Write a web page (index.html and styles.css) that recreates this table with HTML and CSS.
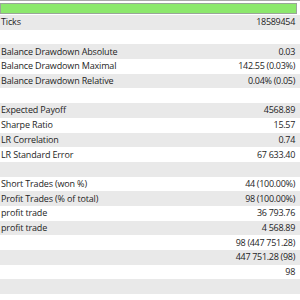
FILE: index.html
```html
<!DOCTYPE html>
<html>
<head>
<meta charset="utf-8">
<link rel="stylesheet" href="styles.css">
</head>
<body>
<div class="panel">
  <div class="progress"><div class="fill"></div></div>
  <div class="table">
    <div class="row"><span class="k">Ticks</span><span class="v">18589454</span></div>
    <div class="row"><span class="k"></span><span class="v"></span></div>
    <div class="row"><span class="k">Balance Drawdown Absolute</span><span class="v">0.03</span></div>
    <div class="row"><span class="k">Balance Drawdown Maximal</span><span class="v">142.55 (0.03%)</span></div>
    <div class="row"><span class="k">Balance Drawdown Relative</span><span class="v">0.04% (0.05)</span></div>
    <div class="row"><span class="k"></span><span class="v"></span></div>
    <div class="row"><span class="k">Expected Payoff</span><span class="v">4568.89</span></div>
    <div class="row"><span class="k">Sharpe Ratio</span><span class="v">15.57</span></div>
    <div class="row"><span class="k">LR Correlation</span><span class="v">0.74</span></div>
    <div class="row"><span class="k">LR Standard Error</span><span class="v">67 633.40</span></div>
    <div class="row"><span class="k"></span><span class="v"></span></div>
    <div class="row"><span class="k">Short Trades (won %)</span><span class="v">44 (100.00%)</span></div>
    <div class="row"><span class="k">Profit Trades (% of total)</span><span class="v">98 (100.00%)</span></div>
    <div class="row"><span class="k">profit trade</span><span class="v">36 793.76</span></div>
    <div class="row"><span class="k">profit trade</span><span class="v">4 568.89</span></div>
    <div class="row"><span class="k"></span><span class="v">98 (447 751.28)</span></div>
    <div class="row"><span class="k"></span><span class="v">447 751.28 (98)</span></div>
    <div class="row"><span class="k"></span><span class="v">98</span></div>
    <div class="row"><span class="k"></span><span class="v"></span></div>
  </div>
</div>
</body>
</html>
```

FILE: styles.css
```css
html, body {
  margin: 0;
  padding: 0;
  background: #ffffff;
}
.panel {
  width: 300px;
  height: 300px;
  overflow: hidden;
  border-top: 1px solid #a8a8a8;
  box-sizing: border-box;
  font-family: "Open Sans", "Noto Sans", sans-serif;
  font-size: 9px;
  color: #1e1e1e;
}
.progress {
  margin: 2px 3px 1px 0;
  height: 11px;
  border: 1px solid #9aa59a;
  box-sizing: border-box;
  background: #8ce86c;
}
.table {
  display: flex;
  flex-direction: column;
}
.row {
  height: 14.7px;
  display: flex;
  align-items: center;
  justify-content: space-between;
  padding: 0 5px 0 1px;
  line-height: 14px;
  white-space: nowrap;
}
.k {
  letter-spacing: -0.15px;
}
.v {
  letter-spacing: -0.3px;
}
.row:nth-child(odd) {
  background: #e9e9e9;
}
.row:nth-child(even) {
  background: #ffffff;
}
```
